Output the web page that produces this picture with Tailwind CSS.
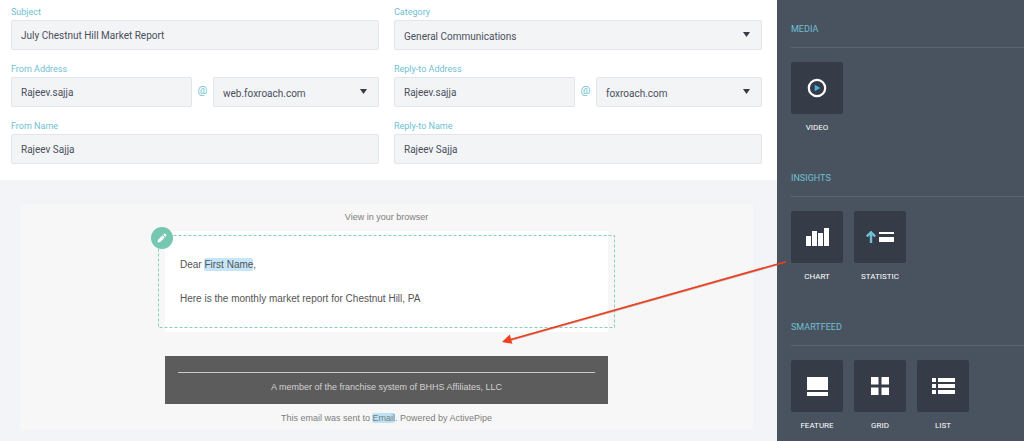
<!DOCTYPE html>
<html lang="en">
<head>
<meta charset="utf-8">
<meta name="viewport" content="width=device-width, initial-scale=1">
<title>Email editor</title>
<script src="https://cdn.jsdelivr.net/npm/@tailwindcss/browser@4"></script>
</head>
<body class="relative flex min-h-screen overflow-x-hidden bg-[#f2f4f7] font-['Roboto',sans-serif] text-[10px] text-[#4a4f5c]">
  <main class="flex min-w-0 flex-1 flex-col">
    <form class="grid grid-cols-2 gap-x-[15px] gap-y-[11px] bg-white pt-1 pr-[15px] pb-4 pl-[11px]">
      <div class="flex flex-col">
        <label for="subject" class="h-4 text-[9px] leading-4 text-[#6fc0d2]">Subject</label>
        <input id="subject" type="text" value="July Chestnut Hill Market Report" class="h-[30px] w-full rounded-xs border border-[#e2e5e9] bg-[#f3f4f6] px-[9px] outline-none">
      </div>
      <div class="flex flex-col">
        <label for="category" class="h-4 text-[9px] leading-4 text-[#6fc0d2]">Category</label>
        <div class="relative">
          <select id="category" class="block h-[30px] w-full appearance-none rounded-xs border border-[#e2e5e9] bg-[#f3f4f6] px-[9px] pt-[2px] outline-none"><option>General Communications</option></select>
          <svg class="pointer-events-none absolute top-3 right-3 h-[5px] w-[7px]" viewBox="0 0 7 5"><path d="M0 0h7L3.5 5z" fill="#343c47"/></svg>
        </div>
      </div>
      <div class="flex flex-col">
        <label for="from-address" class="h-4 text-[9px] leading-4 text-[#6fc0d2]">From Address</label>
        <div class="grid grid-cols-[181fr_21px_166fr]">
          <input id="from-address" type="text" value="Rajeev.sajja" class="h-[30px] w-full min-w-0 rounded-xs border border-[#e2e5e9] bg-[#f3f4f6] px-[9px] outline-none">
          <span class="text-center text-[11px] leading-7 text-[#6fc0d2]">@</span>
          <div class="relative">
            <select aria-label="From domain" class="block h-[30px] w-full appearance-none rounded-xs border border-[#e2e5e9] bg-[#f3f4f6] px-[9px] pt-[2px] outline-none"><option>web.foxroach.com</option></select>
            <svg class="pointer-events-none absolute top-3 right-3 h-[5px] w-[7px]" viewBox="0 0 7 5"><path d="M0 0h7L3.5 5z" fill="#343c47"/></svg>
          </div>
        </div>
      </div>
      <div class="flex flex-col">
        <label for="reply-address" class="h-4 text-[9px] leading-4 text-[#6fc0d2]">Reply-to Address</label>
        <div class="grid grid-cols-[181fr_21px_166fr]">
          <input id="reply-address" type="text" value="Rajeev.sajja" class="h-[30px] w-full min-w-0 rounded-xs border border-[#e2e5e9] bg-[#f3f4f6] px-[9px] outline-none">
          <span class="text-center text-[11px] leading-7 text-[#6fc0d2]">@</span>
          <div class="relative">
            <select aria-label="Reply-to domain" class="block h-[30px] w-full appearance-none rounded-xs border border-[#e2e5e9] bg-[#f3f4f6] px-[9px] pt-[2px] outline-none"><option>foxroach.com</option></select>
            <svg class="pointer-events-none absolute top-3 right-3 h-[5px] w-[7px]" viewBox="0 0 7 5"><path d="M0 0h7L3.5 5z" fill="#343c47"/></svg>
          </div>
        </div>
      </div>
      <div class="flex flex-col">
        <label for="from-name" class="h-4 text-[9px] leading-4 text-[#6fc0d2]">From Name</label>
        <input id="from-name" type="text" value="Rajeev Sajja" class="h-[30px] w-full rounded-xs border border-[#e2e5e9] bg-[#f3f4f6] px-[9px] outline-none">
      </div>
      <div class="flex flex-col">
        <label for="reply-name" class="h-4 text-[9px] leading-4 text-[#6fc0d2]">Reply-to Name</label>
        <input id="reply-name" type="text" value="Rajeev Sajja" class="h-[30px] w-full rounded-xs border border-[#e2e5e9] bg-[#f3f4f6] px-[9px] outline-none">
      </div>
    </form>

    <section class="mt-6 mr-6 mb-2 ml-5 flex flex-col items-center bg-[#f7f7f7] pb-1 font-['Liberation_Sans',sans-serif] text-[9px] text-[#7d7d7d]">
      <a href="#" class="mt-1 leading-[18px]">View in your browser</a>
      <div class="w-full max-w-[443px]">
        <article class="relative mt-[5px] bg-white px-[15px] pt-[26px] pb-[25px] text-[10px] leading-4 text-[#555]">
          <div class="pointer-events-none absolute -inset-x-[7px] top-1 bottom-1">
            <svg class="h-full w-full" aria-hidden="true"><rect x="0.5" y="0.5" style="width:calc(100% - 1px);height:calc(100% - 1px)" fill="none" stroke="#86cebd" stroke-dasharray="3 2"/></svg>
          </div>
          <button type="button" aria-label="Edit block" class="absolute -top-[4px] -left-[14px] flex size-[22px] items-center justify-center rounded-full bg-[#75c7b2]">
            <svg class="size-[10px]" viewBox="0 0 10 10" fill="#fff"><path d="M.5 9.5 1 6.8 5.6 2.2l2.2 2.2L3.2 9zM6.2 1.6l.8-.8q.6-.6 1.2 0l1 1q.6.6 0 1.2l-.8.8z"/></svg>
          </button>
          <p>Dear <mark class="rounded-xs bg-[#c5e6f8] py-px text-[#555]">First Name</mark>,</p>
          <p class="mt-[18px]">Here is the monthly market report for Chestnut Hill, PA</p>
        </article>
        <div class="mt-6 bg-[#5c5c5c] px-[13px] pt-4 pb-[9px] text-center text-[#d2d2d2]">
          <hr class="mb-[6px] border-[#c8c8c8]">
          <p class="leading-4">A member of the franchise system of BHHS Affiliates, LLC</p>
        </div>
      </div>
      <p class="mt-[6px] leading-4">This email was sent to <mark class="rounded-xs bg-[#bfe2f2] text-[#6d7d86]">Email</mark>. Powered by ActivePipe</p>
    </section>
  </main>

  <aside class="flex w-[247px] shrink-0 flex-col gap-[34px] bg-[#49525f] pt-[21px] pl-[14px] text-[8px] leading-4 text-white">
    <section>
      <h2 class="border-b border-[#5c6572] pb-[10px] text-[9px] leading-4 text-[#6fc0d2]">MEDIA</h2>
      <div class="mt-[14px] flex gap-[11px]">
        <button type="button" class="flex w-[52px] flex-col items-center gap-[6px]">
          <span class="flex size-[52px] items-center justify-center rounded-xs bg-[#353c47]"><svg class="size-[20px]" viewBox="0 0 20 20"><circle cx="10" cy="10" r="8.2" fill="none" stroke="#fff" stroke-width="2.2"/><path d="M7.700 6.700v6.600l5.600-3.300z" fill="#42b4e6"/></svg></span>
          VIDEO
        </button>
      </div>
    </section>
    <section>
      <h2 class="border-b border-[#5c6572] pb-[10px] text-[9px] leading-4 text-[#6fc0d2]">INSIGHTS</h2>
      <div class="mt-[14px] flex gap-[11px]">
        <button type="button" class="flex w-[52px] flex-col items-center gap-[6px]">
          <span class="flex size-[52px] items-center justify-center rounded-xs bg-[#353c47]"><svg class="h-[18px] w-[23px]" viewBox="0 0 23 18" fill="#fff"><path d="M0 8h5v10H0zM6 3h5v15H6zM12 5h5v13h-5zM18 0h5v18h-5z"/></svg></span>
          CHART
        </button>
        <button type="button" class="flex w-[52px] flex-col items-center gap-[6px]">
          <span class="flex size-[52px] items-center justify-center rounded-xs bg-[#353c47]"><svg class="h-[12px] w-[28px]" viewBox="0 0 28 12"><path d="M5 12V1.5M.8 5.500 5 1.300l4.200 4.200" fill="none" stroke="#6fc0d2" stroke-width="2.400"/><path d="M13 1h15v2H13zM13 6h15v5H13z" fill="#fff"/></svg></span>
          STATISTIC
        </button>
      </div>
    </section>
    <section>
      <h2 class="border-b border-[#5c6572] pb-[10px] text-[9px] leading-4 text-[#6fc0d2]">SMARTFEED</h2>
      <div class="mt-[14px] flex gap-[11px]">
        <button type="button" class="flex w-[52px] flex-col items-center gap-[6px]">
          <span class="flex size-[52px] items-center justify-center rounded-xs bg-[#353c47]"><svg class="h-[19px] w-[21px]" viewBox="0 0 21 19" fill="#fff"><path d="M0 0h21v13H0zM0 15h21v4H0z"/></svg></span>
          FEATURE
        </button>
        <button type="button" class="flex w-[52px] flex-col items-center gap-[6px]">
          <span class="flex size-[52px] items-center justify-center rounded-xs bg-[#353c47]"><svg class="size-[18px]" viewBox="0 0 18 18" fill="#fff"><path d="M0 0h7.500v7.500H0zM10.500 0H18v7.500h-7.500zM0 10.500h7.500V18H0zM10.500 10.500H18V18h-7.500z"/></svg></span>
          GRID
        </button>
        <button type="button" class="flex w-[52px] flex-col items-center gap-[6px]">
          <span class="flex size-[52px] items-center justify-center rounded-xs bg-[#353c47]"><svg class="h-[16px] w-[23px]" viewBox="0 0 23 16" fill="#fff"><path d="M0 0h4v4H0zM6 0h17v4H6zM0 6h4v4H0zM6 6h17v4H6zM0 12h4v4H0zM6 12h17v4H6z"/></svg></span>
          LIST
        </button>
      </div>
    </section>
  </aside>

  <!-- Drag direction: chart tile to email body -->
  <svg class="pointer-events-none absolute top-[260px] right-[236px] h-[88px] w-[288px]" viewBox="0 0 288 88" aria-hidden="true"><path d="M286 2 11 80" stroke="#8b4a3a" stroke-opacity=".4" stroke-width="2.200"/><path d="M286 1.700 11 79.500" stroke="#ee3f20" stroke-width="1.600"/><path d="m2 82 7.800-7.400 2.600 9.200z" fill="#ee3f20"/></svg>
</body>
</html>
